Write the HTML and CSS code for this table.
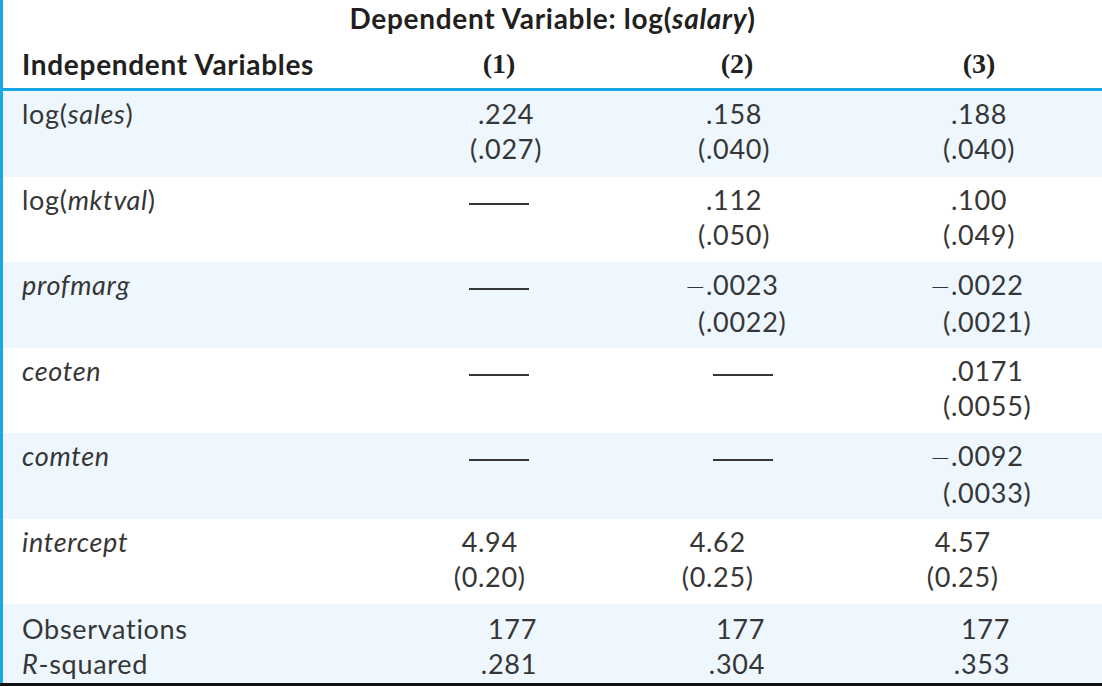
FILE: index.html
```html
<!DOCTYPE html>
<html>
<head>
<meta charset="utf-8">
<link rel="stylesheet" href="styles.css">
</head>
<body>
<div class="table">
  <div class="wrap">
    <div class="head">
      <div class="title">Dependent Variable: log(<i>salary</i>)</div>
      <div class="colhead">
        <div class="lab">Independent Variables</div>
        <div class="n">(1)</div>
        <div class="n">(2)</div>
        <div class="n">(3)</div>
      </div>
    </div>

    <div class="row band">
      <div class="lab">log(<i>sales</i>)</div>
      <div class="c1"><div class="num"><span class="i"></span><span>.224</span></div><div class="num"><span class="i">(</span><span>.027)</span></div></div>
      <div class="c2"><div class="num"><span class="i"></span><span>.158</span></div><div class="num"><span class="i">(</span><span>.040)</span></div></div>
      <div class="c3"><div class="num"><span class="i"></span><span>.188</span></div><div class="num"><span class="i">(</span><span>.040)</span></div></div>
    </div>

    <div class="row">
      <div class="lab">log(<i>mktval</i>)</div>
      <div><div class="dash"></div></div>
      <div class="c2"><div class="num"><span class="i"></span><span>.112</span></div><div class="num"><span class="i">(</span><span>.050)</span></div></div>
      <div class="c3"><div class="num"><span class="i"></span><span>.100</span></div><div class="num"><span class="i">(</span><span>.049)</span></div></div>
    </div>

    <div class="row band">
      <div class="lab"><i>profmarg</i></div>
      <div><div class="dash"></div></div>
      <div class="c2"><div class="num"><span class="i"><span class="minus">−</span></span><span>.0023</span></div><div class="num"><span class="i">(</span><span>.0022)</span></div></div>
      <div class="c3"><div class="num"><span class="i"><span class="minus">−</span></span><span>.0022</span></div><div class="num"><span class="i">(</span><span>.0021)</span></div></div>
    </div>

    <div class="row">
      <div class="lab"><i>ceoten</i></div>
      <div><div class="dash"></div></div>
      <div><div class="dash d2"></div></div>
      <div class="c3"><div class="num"><span class="i"></span><span>.0171</span></div><div class="num"><span class="i">(</span><span>.0055)</span></div></div>
    </div>

    <div class="row band">
      <div class="lab"><i>comten</i></div>
      <div><div class="dash"></div></div>
      <div><div class="dash d2"></div></div>
      <div class="c3"><div class="num"><span class="i"><span class="minus">−</span></span><span>.0092</span></div><div class="num"><span class="i">(</span><span>.0033)</span></div></div>
    </div>

    <div class="row">
      <div class="lab"><i>intercept</i></div>
      <div class="c1"><div class="num"><span class="i">4</span><span>.94</span></div><div class="num"><span class="i">(0</span><span>.20)</span></div></div>
      <div class="c2"><div class="num"><span class="i">4</span><span>.62</span></div><div class="num"><span class="i">(0</span><span>.25)</span></div></div>
      <div class="c3"><div class="num"><span class="i">4</span><span>.57</span></div><div class="num"><span class="i">(0</span><span>.25)</span></div></div>
    </div>

    <div class="row band last">
      <div class="lab">Observations<br><i>R</i>-squared</div>
      <div class="c1"><div class="num obs"><span class="i"></span><span class="f">177</span></div><div class="num obs"><span class="i"></span><span class="f">.281</span></div></div>
      <div class="c2"><div class="num obs"><span class="i"></span><span class="f">177</span></div><div class="num obs"><span class="i"></span><span class="f">.304</span></div></div>
      <div class="c3"><div class="num obs"><span class="i"></span><span class="f">177</span></div><div class="num obs"><span class="i"></span><span class="f">.353</span></div></div>
    </div>
  </div>
</div>
</body>
</html>
```

FILE: styles.css
```css
* { box-sizing: border-box; }

body {
  margin: 0;
  background: #fff;
  font-family: Lato, "Open Sans", sans-serif;
  color: #363636;
  letter-spacing: 0.7px;
}

.table {
  width: 1102px;
  border-bottom: 3px solid #111;
}

.wrap {
  border-left: 3px solid #1ba6e6;
  height: 683px;
}

.head {
  height: 91px;
  border-bottom: 3px solid #1ba6e6;
  color: #231f20;
  font-weight: 700;
  font-size: 28px;
  line-height: 36px;
}

.title {
  height: 46px;
  text-align: center;
}

.colhead {
  display: grid;
  grid-template-columns: 377px 238px 238px 1fr;
}

.colhead .n {
  text-align: center;
  letter-spacing: 0;
  font-family: "Liberation Serif", serif;
}

.row {
  display: grid;
  grid-template-columns: 377px 238px 238px 1fr;
  height: 85.5px;
  padding-top: 5px;
  font-size: 27px;
  line-height: 35px;
}

.row.band { background: #eef7fd; }

.row.last {
  height: 79px;
  padding-top: 7px;
}

.lab { padding-left: 19px; }

.num { display: flex; }

.i {
  width: 40px;
  text-align: right;
}

.minus {
  font-family: "DejaVu Sans", sans-serif;
  font-weight: 300;
  letter-spacing: 0;
  font-size: 25px;
}

.obs .f {
  width: 59px;
  text-align: right;
}

.c1 { padding-left: 58px; }
.c2 { padding-left: 48px; }
.c3 { padding-left: 55px; }

.dash {
  width: 60px;
  height: 2px;
  background: #363636;
  margin: 21px auto 0;
}

.dash.d2 {
  margin-left: 95px;
}
```
